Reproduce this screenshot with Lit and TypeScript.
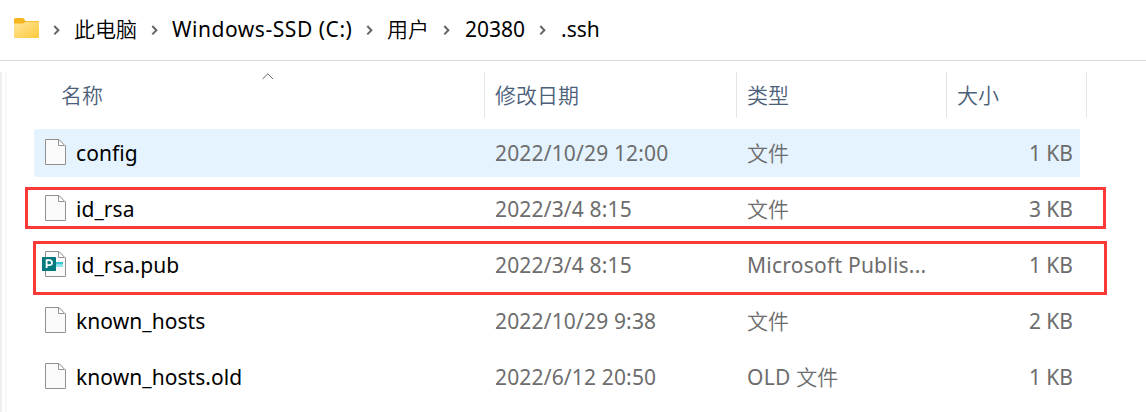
import { LitElement, html, svg, css } from "lit";
import { customElement, property } from "lit/decorators.js";

interface FileEntry {
  name: string;
  date: string;
  type: string;
  size: string;
  icon: "file" | "publisher";
  state: string;
}

const files: FileEntry[] = [
  { name: "config", date: "2022/10/29 12:00", type: "文件", size: "1 KB", icon: "file", state: "hover" },
  { name: "id_rsa", date: "2022/3/4 8:15", type: "文件", size: "3 KB", icon: "file", state: "" },
  { name: "id_rsa.pub", date: "2022/3/4 8:15", type: "Microsoft Publis...", size: "1 KB", icon: "publisher", state: "" },
  { name: "known_hosts", date: "2022/10/29 9:38", type: "文件", size: "2 KB", icon: "file", state: "" },
  { name: "known_hosts.old", date: "2022/6/12 20:50", type: "OLD 文件", size: "1 KB", icon: "file", state: "" },
];

@customElement("file-icon")
export class FileIcon extends LitElement {
  @property() kind = "file";

  static styles = css`
    :host { display: block; width: 24px; height: 28px; }
    svg { display: block; }
  `;

  render() {
    return html`<svg width="24" height="28" viewBox="0 0 24 28">
      <path d="M3.5 1.5H17L23.5 8V26.5H3.5Z" fill="#fafafa" stroke="#929292" />
      <path d="M16.5 1.5V7.5H23.5" fill="#fff" stroke="#929292" />
      <path d="M17 2L23 8" stroke="#b4b4b4" />
      ${this.kind === "publisher"
        ? svg`<path d="M14 12H21V14.6H14Z" fill="#37c6d0" />
            <path d="M14 14.6H21V17H14Z" fill="#8fe5ea" />
            <rect x="0" y="7" width="14" height="14" rx="0.6" fill="#047a7e" />
            <path d="M4.6 18V10.1H7.3Q10 10.1 10 12.7T7.1 15.2H4.6" fill="none" stroke="#fff" stroke-width="1.8" />`
        : ""}
    </svg>`;
  }
}

@customElement("app-root")
export class AppRoot extends LitElement {
  static styles = css`
    :host {
      display: flex;
      flex-direction: column;
      position: relative;
      width: 1146px;
      height: 412px;
      overflow: hidden;
      background: #fff;
      color: #000;
      font: 400 21px/28px "Noto Sans", "Noto Sans CJK SC", sans-serif;
      white-space: pre;
    }
    .cjk { font-family: "Noto Sans CJK SC", sans-serif; font-weight: 350; letter-spacing: 0; }
    .path {
      display: flex;
      border-bottom: 1px solid #d9d9d9;
      flex: none;
      box-sizing: border-box;
      height: 61px;
      padding-left: 14px;
    }
    .folder { display: block; width: 25px; margin: 18px 14px 0 0; }
    .crumb { display: flex; align-items: center; height: 58px; }
    .chevron { display: block; width: 8px; margin: 2px 14px 0 0; }
    .label { margin-right: 14px; }
    .label.han { margin: -1px 14px 0 -1px; }
    .label.drive { letter-spacing: 0.54px; margin: 0 13.5px 0 -1px; }
    .content { display: flex; flex: 1; padding-top: 11px; }
    .pane { width: 2px; background: #efefef; margin-right: 3px; }
    .edge { width: 2px; background: #f7f7f7; margin-right: 27px; }
    .list { width: 1053px; }
    .head { display: grid; grid-template-columns: 451px 252px 210px 140px; height: 46px; color: #4c607a; }
    .cell { border-right: 1px solid #e5e5e5; padding: 8px 0 0 10px; position: relative; }
    .cell.first { padding-left: 27px; }
    .sort { position: absolute; left: 228px; top: 1px; }
    .rows { display: grid; gap: 8px; padding-top: 11px; width: 1046px; }
    .row {
      display: grid;
      grid-template-columns: 42px 419px 252px 180px 146px;
      height: 48px;
      line-height: 48px;
      border-radius: 2px;
      color: #6d6d6d;
    }
    .row.hover { background: #e5f3ff; }
    .icon { padding: 9px 0 0 8px; }
    .name { color: #000; letter-spacing: 0.06px; }
    .date { letter-spacing: 0.16px; }
    .type { letter-spacing: 0.24px; }
    .type.han { margin-top: -1px; }
    .size { text-align: right; }
    .mark { position: absolute; box-sizing: border-box; border: 3px solid #fb3939; }
    .mark.private { left: 25px; top: 187px; width: 1081px; height: 42px; }
    .mark.public { left: 33px; top: 241px; width: 1074px; height: 54px; }
  `;

  private text(value: string) {
    return value.split(/([\u4e00-\u9fff]+)/).map((part) =>
      /[\u4e00-\u9fff]/.test(part) ? html`<span class="cjk">${part}</span>` : part
    );
  }

  private script(value: string) {
    if (/[\u4e00-\u9fff]/.test(value)) return "han";
    return value.includes("(") ? "drive" : "";
  }

  render() {
    return html`
      <nav class="path"><svg class="folder" width="25" height="22" viewBox="0 0 25 22">
          <defs><linearGradient id="f" x1="0" y1="0" x2="1" y2="1"><stop stop-color="#ffe69a" /><stop offset="1" stop-color="#fdc93c" /></linearGradient></defs>
          <path d="M1.5 0H8.5Q9.5 0 10 0.8L11.5 3H24Q25 3 25 4V12H0V1.5Q0 0 1.5 0Z" fill="#f7b51e" />
          <path d="M0 5.5H8.5Q9.5 5.5 10 5L11.3 3.7H24Q25 3.7 25 4.7V19Q25 20 24 20H1Q0 20 0 19Z" fill="url(#f)" />
        </svg>${["此电脑", "Windows-SSD (C:)", "用户", "20380", ".ssh"].map(
          (label) => html`<div class="crumb"><svg class="chevron" width="8" height="12" viewBox="0 0 8 12"><path d="M1.3 2L5.4 6.2L1.3 10.4" fill="none" stroke="#666" stroke-width="2" /></svg><span class="label ${this.script(label)}">${this.text(label)}</span></div>`
        )}</nav>
      <main class="content"><div class="pane"></div><div class="edge"></div><section class="list"><div class="head">${["名称", "修改日期", "类型", "大小"].map(
          (title, i) => html`<div class="cell ${i === 0 ? "first" : ""}">${this.text(title)}${i === 0
            ? html`<svg class="sort" width="12" height="7" viewBox="0 0 12 7"><path d="M0.5 6L5.8 0.8L11 6" fill="none" stroke="#666" /></svg>`
            : ""}</div>`
        )}</div><div class="rows">${files.map(
          (file) => html`<div class="row ${file.state}"><div class="icon"><file-icon .kind=${file.icon}></file-icon></div><div class="name">${file.name}</div><div class="date">${file.date}</div><div class="type ${this.script(file.type)}">${this.text(file.type)}</div><div class="size">${file.size}</div></div>`
        )}</div></section></main>
      <div class="mark private"></div>
      <div class="mark public"></div>
    `;
  }
}
